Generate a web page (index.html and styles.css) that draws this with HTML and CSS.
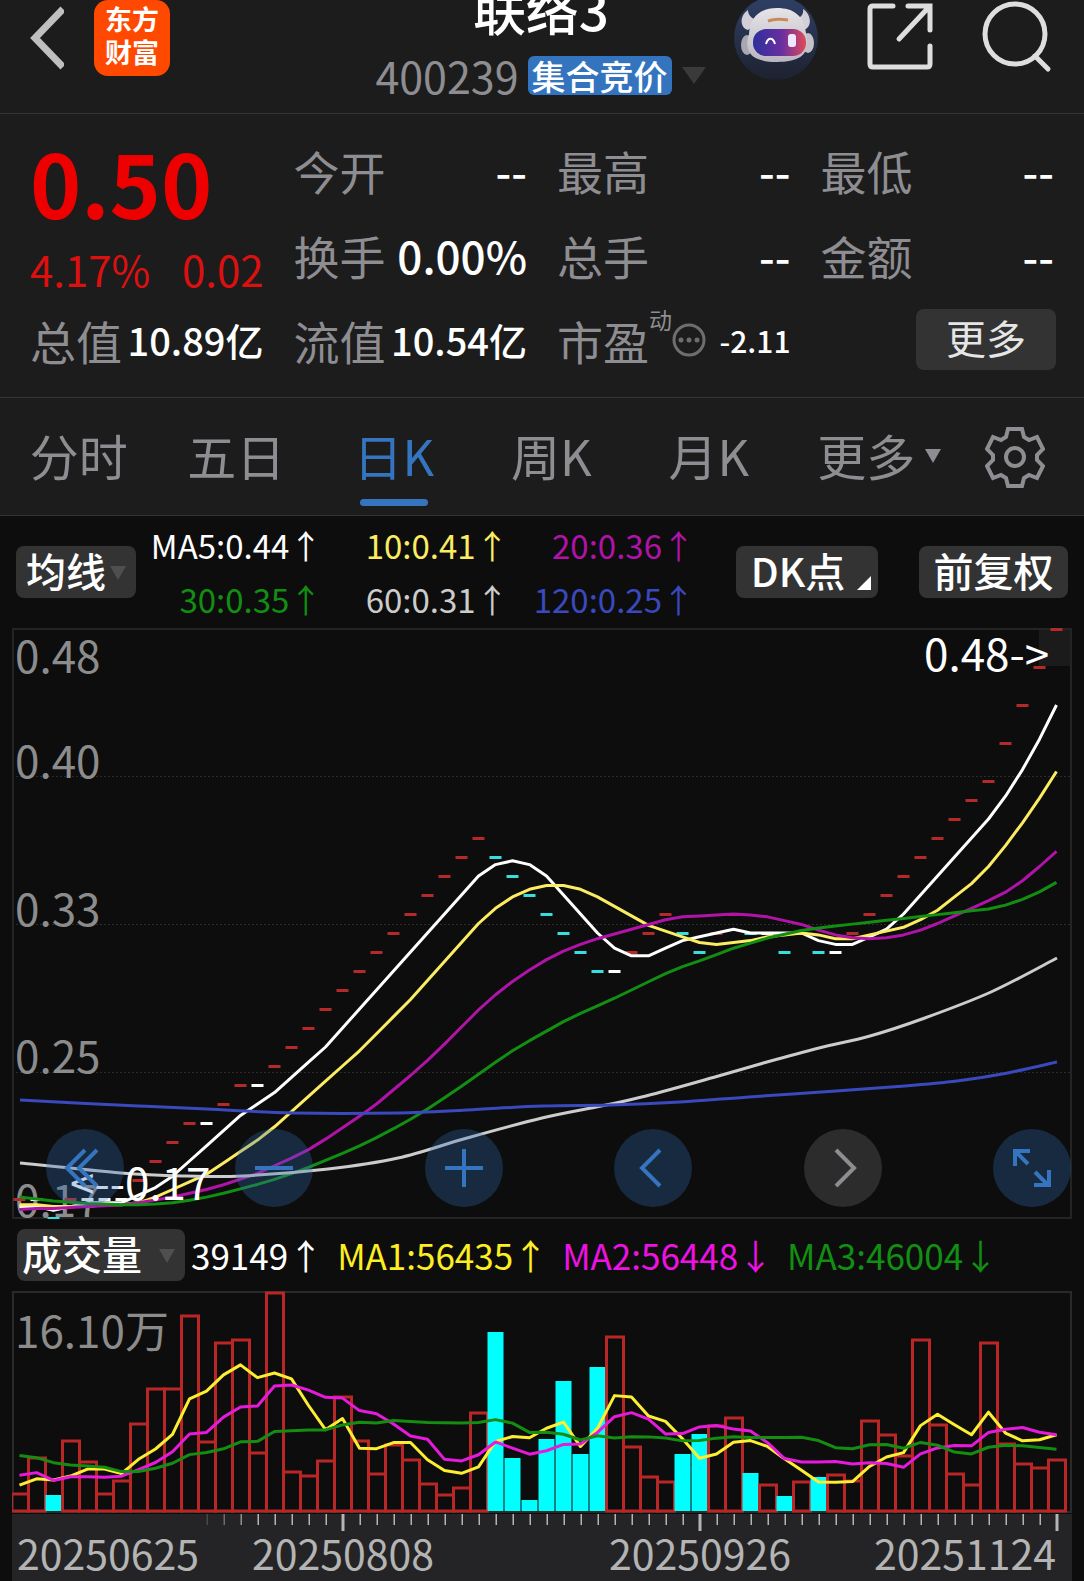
FILE: index.html
```html
<!DOCTYPE html>
<html lang="zh-CN">
<head>
<meta charset="utf-8">
<meta name="viewport" content="width=device-width, initial-scale=1">
<title>联络3 400239</title>
<link rel="stylesheet" href="styles.css">
</head>
<body>

<header class="header">
	<div class="header-left">
		<a class="back" href="#" aria-label="返回">
			<svg width="34" height="76" viewBox="0 0 34 76"><path d="M33 9 5 38l28 29" fill="none" stroke="#bfbfbf" stroke-width="7"/></svg>
		</a>
		<a class="logo" href="#"><span>东方</span><span>财富</span></a>
	</div>
	<div class="stock">
		<h1>联络3</h1>
		<div class="stock-code">
			<span>400239</span>
			<span class="tag">集合竞价</span>
			<svg width="26" height="17" viewBox="0 0 26 17"><path d="M1 0h24L13 17z" fill="#3a3a3a"/></svg>
		</div>
	</div>
	<div class="header-right">
		<a href="#" aria-label="助手">
			<svg width="84" height="84" viewBox="0 0 84 84">
				<defs>
					<linearGradient id="sky" x1="0" y1="0" x2="0" y2="1"><stop offset="0" stop-color="#2f4066"/><stop offset="1" stop-color="#1e2230"/></linearGradient>
					<linearGradient id="face" x1="0" y1="0" x2="1" y2="0"><stop offset="0" stop-color="#2d2f9c"/><stop offset=".55" stop-color="#6a2fa0"/><stop offset="1" stop-color="#e04a58"/></linearGradient>
					<linearGradient id="shell" x1="0" y1="0" x2="0" y2="1"><stop offset="0" stop-color="#e6e4e8"/><stop offset="1" stop-color="#b9b6bf"/></linearGradient>
				</defs>
				<circle cx="42" cy="42" r="42" fill="url(#sky)"/>
				<path d="M14 14C5 20 6 32 14 34l12-10c-7 0-12-4-12-10zM69 13c9 6 9 18 1 21L59 23c7 0 11-4 10-10z" fill="#d2d0d6"/>
				<ellipse cx="13" cy="49" rx="6" ry="10" fill="#a9a7b2"/>
				<ellipse cx="74" cy="47" rx="6" ry="10" fill="#c4c1c9"/>
				<path d="M15 38c1-18 12-26 28-26 17 0 27 8 29 25 5 20-4 29-29 29-24 0-34-9-28-28z" fill="url(#shell)"/>
				<rect x="19" y="33" width="53" height="27" rx="13" fill="url(#face)"/>
				<path d="M34 25c5-2 14-2 20-1" fill="none" stroke="#c98a5a" stroke-width="3"/>
				<path d="M32 48c2-7 7-7 9 0" fill="none" stroke="#fff" stroke-width="2"/>
				<rect x="54" y="38" width="8" height="13" rx="3" fill="#efe6ff"/>
			</svg>
		</a>
		<a href="#" aria-label="分享">
			<svg width="66" height="84" viewBox="0 0 66 84"><path d="M26 10H6q-3 0-3 3v55q0 3 3 3h54q3 0 3-3V50M41 10h22v24M62 11 32 43" fill="none" stroke="#dedede" stroke-width="5" stroke-linecap="round"/></svg>
		</a>
		<a href="#" aria-label="搜索">
			<svg width="70" height="84" viewBox="0 0 70 84"><circle cx="33" cy="38" r="30" fill="none" stroke="#dedede" stroke-width="5"/><path d="m53 60 13 13" stroke="#dedede" stroke-width="5" stroke-linecap="round"/></svg>
		</a>
	</div>
</header>

<section class="quote">
	<div class="price">
		<strong>0.50</strong>
		<p><span>4.17%</span><span>0.02</span></p>
	</div>
	<div class="cell"><span>今开</span><b>--</b></div>
	<div class="cell"><span>最高</span><b>--</b></div>
	<div class="cell"><span>最低</span><b>--</b></div>
	<div class="cell"><span>换手</span><b>0.00%</b></div>
	<div class="cell"><span>总手</span><b>--</b></div>
	<div class="cell"><span>金额</span><b>--</b></div>
	<div class="cell"><span>总值</span><b class="mid">10.89亿</b></div>
	<div class="cell"><span>流值</span><b class="mid">10.54亿</b></div>
	<div class="cell">
		<span>市盈</span><sup>动</sup>
		<svg width="34" height="34" viewBox="0 0 34 34"><circle cx="17" cy="17" r="15" fill="none" stroke="#6e6e70" stroke-width="3"/><g fill="#6e6e70"><circle cx="9" cy="17" r="2.5"/><circle cx="17" cy="17" r="2.5"/><circle cx="25" cy="17" r="2.5"/></g></svg>
		<b class="small">-2.11</b>
	</div>
	<button class="more" type="button">更多</button>
</section>

<nav class="tabs">
	<a href="#">分时</a>
	<a href="#">五日</a>
	<a href="#" class="active">日K</a>
	<a href="#">周K</a>
	<a href="#">月K</a>
	<a href="#" class="drop">更多</a>
	<button type="button" aria-label="设置">
		<svg width="60" height="62" viewBox="0 0 60 62"><path d="M23 3h14l2 8 5 3 8-3 6 12-6 6v5l6 6-6 12-8-3-5 3-2 8H23l-2-8-5-3-8 3-6-12 6-6v-5l-6-6 6-12 8 3 5-3z" fill="none" stroke="#8e8d92" stroke-width="4"/><circle cx="30" cy="31" r="9" fill="none" stroke="#8e8d92" stroke-width="4"/></svg>
	</button>
</nav>

<section class="averages">
	<label class="picker">
		<select aria-label="主图指标"><option>均线</option></select>
	</label>
	<ul>
		<li class="white">MA5:0.44↑</li>
		<li class="yellow">10:0.41↑</li>
		<li class="purple">20:0.36↑</li>
		<li class="green">30:0.35↑</li>
		<li class="gray">60:0.31↑</li>
		<li class="blue">120:0.25↑</li>
	</ul>
	<button class="dk" type="button">DK点</button>
	<button class="adjust" type="button">前复权</button>
</section>

<section class="chart">
	<svg id="kline" viewBox="0 0 1060 591"></svg>
	<div class="controls">
		<button type="button" aria-label="最早"><svg viewBox="0 0 78 78"><path d="M39 21 21 39l18 18M51 21 33 39l18 18"/></svg></button>
		<button type="button" aria-label="缩小"><svg viewBox="0 0 78 78"><path d="M20 39h38"/></svg></button>
		<button type="button" aria-label="放大"><svg viewBox="0 0 78 78"><path d="M20 39h38M39 20v38"/></svg></button>
		<button type="button" aria-label="向左"><svg viewBox="0 0 78 78"><path d="M46 21 28 39l18 18"/></svg></button>
		<button type="button" aria-label="向右" class="off"><svg viewBox="0 0 78 78"><path d="m32 21 18 18-18 18"/></svg></button>
		<button type="button" aria-label="全屏"><svg viewBox="0 0 78 78"><path d="M37 22H22v15M22 22l13 13M42 43l13 13M56 41v15H41"/></svg></button>
	</div>
</section>

<section class="volumes">
	<label class="picker wide">
		<select aria-label="副图指标"><option>成交量</option></select>
	</label>
	<span class="white">39149↑</span>
	<span class="bright-yellow">MA1:56435↑</span>
	<span class="magenta">MA2:56448↓</span>
	<span class="green">MA3:46004↓</span>
</section>

<section class="chart">
	<svg id="volume" viewBox="0 0 1060 290"></svg>
</section>

<script src="chart.js"></script>
</body>
</html>
```

FILE: styles.css
```css
* { padding: 0; margin: 0; box-sizing: border-box; }
body { background: #0d0d0d; color: #fff; font-family: "Noto Sans CJK SC", sans-serif; }
a { color: inherit; text-decoration: none; }
ul { list-style: none; }
b { font-weight: 500; }
svg { display: block; }
button, select { font-family: inherit; color: #fff; border: none; background: none; cursor: pointer; }

.white { color: #fff; }
.yellow { color: #fbec62; }
.bright-yellow { color: #fdee22; }
.purple { color: #b013a8; }
.magenta { color: #ee12e2; }
.green { color: #128f12; }
.gray { color: #ccc; }
.blue { color: #3a49bd; }

/* header */
.header { display: grid; grid-template-columns: 1fr auto 1fr; height: 114px; padding: 0 32px 0 30px; background: #1c1c1c; border-bottom: 1px solid #343434; overflow: hidden; }
.header-left { display: flex; gap: 30px; align-items: flex-start; }
.header-right { display: flex; gap: 49px; justify-content: flex-end; margin-top: -4px; }
.logo { display: flex; flex-direction: column; align-items: center; width: 76px; height: 76px; padding-top: 2px; border-radius: 14px; background: #ff4800; font-size: 27px; font-weight: bold; line-height: 33px; }
.stock { display: flex; flex-direction: column; align-items: center; margin-top: -32px; }
.stock h1 { font-size: 53px; font-weight: 500; line-height: 80px; }
.stock-code { display: flex; align-items: center; gap: 9px; color: #8e8d92; font-size: 43px; line-height: 54px; }
.tag { padding: 0 4px; border-radius: 6px; background: #3474bf; color: #fff; font-size: 34px; font-weight: 500; line-height: 39px; }

/* quote */
.quote { display: grid; grid-template-columns: repeat(4, 1fr); grid-auto-rows: 85px; column-gap: 30px; padding: 16px 30px 12px; background: #1c1c1c; border-bottom: 1px solid #343434; }
.price { grid-row: span 2; color: #ee0000; }
.price strong { display: block; font-size: 87px; font-weight: bold; line-height: 102px; }
.price p { display: flex; justify-content: space-between; color: #dd1010; font-size: 42px; line-height: 74px; }
.cell { display: flex; align-items: center; padding-bottom: 6px; color: #8e8d92; font-size: 46px; white-space: nowrap; }
.cell b { margin-left: auto; color: #fff; font-size: 44px; }
.cell b.mid { font-size: 38px; }
.cell b.small { font-size: 30px; }
.cell sup { align-self: flex-start; font-size: 23px; line-height: 38px; }
.more { align-self: center; justify-self: end; width: 140px; height: 61px; margin-right: -2px; padding-bottom: 6px; border-radius: 8px; background: #333; color: #e6e6e6; font-size: 40px; line-height: 54px; }
.quote .more { margin-bottom: 6px; }

/* tabs */
.tabs { display: grid; grid-template-columns: repeat(6, 1fr) 139px; height: 118px; background: #1c1c1c; border-bottom: 1px solid #343434; color: #8e8d92; font-size: 49px; line-height: 114px; }
.tabs a { position: relative; text-align: center; }
.tabs button { display: flex; align-items: center; justify-content: center; }
.tabs .active { color: #3574bf; }
.tabs .active:after { content: ""; position: absolute; bottom: 9px; left: 50%; width: 68px; height: 7px; margin-left: -34px; border-radius: 4px; background: #3574bf; }
.tabs .drop:after { content: ""; position: absolute; top: 51px; right: 4px; border: 8px solid transparent; border-top: 14px solid #8e8d92; border-bottom: 0; }

/* indicator rows */
.averages { display: flex; align-items: center; height: 112px; padding: 0 16px; font-size: 40px; }
.averages ul { display: grid; grid-template-columns: repeat(3, 1fr); flex: 1; margin-right: 41px; font-size: 33px; line-height: 54px; text-align: right; white-space: nowrap; }
.picker { position: relative; flex: none; width: 120px; height: 52px; border-radius: 8px; background: #333; }
.picker select { display: block; appearance: none; width: 100%; height: 52px; padding: 0 0 4px 10px; font-size: 40px; font-weight: 500; line-height: 48px; }
.picker:after { content: ""; position: absolute; right: 10px; top: 20px; border: 8px solid transparent; border-top: 14px solid #4f4f4f; border-bottom: 0; pointer-events: none; }
.picker.wide { width: 168px; margin-right: -8px; }
.picker.wide select { padding-left: 5px; }
.dk, .adjust { height: 52px; padding-bottom: 4px; border-radius: 8px; background: #333; font-size: 40px; font-weight: 500; line-height: 48px; }
.dk { position: relative; width: 142px; padding-right: 18px; margin-right: 41px; }
.dk:after { content: ""; position: absolute; right: 7px; bottom: 8px; border-left: 14px solid transparent; border-bottom: 14px solid #fff; }
.adjust { width: 149px; }

.volumes { display: flex; align-items: center; gap: 14px; height: 72px; padding-left: 17px; font-size: 35px; line-height: 50px; white-space: nowrap; }

/* charts */
.chart { position: relative; margin: 0 12px; }
.chart > svg { width: 100%; height: auto; }
.chart text { font-size: 44px; fill: #8c8c8c; }
.chart .mark { fill: #fff; }
.chart .date { font-size: 41px; fill: #b4b4b4; }
.controls { position: absolute; left: 34px; right: 1px; bottom: 12px; display: flex; justify-content: space-between; }
.controls button { width: 78px; height: 78px; border-radius: 50%; background: rgba(50, 110, 183, 0.3); }
.controls path { fill: none; stroke: #3574bf; stroke-width: 4; }
.controls .off { background: #2c2c2c; }
.controls .off path { stroke: #8e8d92; }
```

FILE: chart.js
```js
var STEP = 17, LEFT = 7.5;
var RED = '#b92626', CYAN = '#00ffff';

// closes before the first visible day, oldest first
var oldPrices = [21,20,20,20,19,19,19,19,19,18, 17,17,17,17,17,17,17,17,18,18, 18,18,18,18,17,18,18,17,17];
var prices = [18,18,17,18,18,18,18,19,20,21,22,22,23,24,24,25,26,27,28,29,30,31,32,33,34,35,36,37,36,35,34,
	33,32,31,30,30,31,32,33,32,31,32,33,32,32,31,32,31,31,32,33,34,35,36,37,38,39,40,42,44,46,48];
var oldVolumes = [7.3,8.6,8.6,5.2,3.4,8.7,6.5,4.2,1.8, 1.7,2.1,7,2.6,3.7,1.7,1.7,1.7,3.8,1.2];
var volumes = [1.42,4.03,1.27,5.26,3.74,1.42,2.37,6.5,9.05,9.12,14.4,5.18,12.49,12.71,4.43,16.1,3.03,2.74,3.84,8.51,5.26,
	2.86,4.96,3.89,2.15,1.32,1.86,7.31,13.2,3.96,0.86,5.35,9.58,4.23,10.61,12.86,4.84,2.62,2.27,4.23,5.75,6.38,6.94,2.86,
	2.08,1.2,2.25,2.59,2.79,2.32,6.72,5.75,4.16,12.69,6.48,2.89,2.08,12.42,5.06,3.62,3.28,3.91];
// days where the volume bar is filled
var down = [2,28,29,30,31,32,33,34,39,40,43,45,47];

function x(i) { return LEFT + i * STEP; }
function priceY(p) { return 590 - (p - 17) * 19; }
function volumeY(v) { return 221 - v * 13.65; }

function average(old, data, n, toY) {
	var all = old.concat(data), points = [];
	for (var i = 0; i < data.length; i++) {
		var sum = 0;
		for (var j = 0; j < n; j++) {
			sum += all[old.length + i - j];
		}
		points.push([x(i), toY(sum / n)]);
	}
	return points;
}

function line(points, color) {
	return '<polyline points="' + points.join(' ') + '" fill="none" stroke="' + color + '" stroke-width="3" stroke-linejoin="round"/>';
}

// curve through a few points
function curve(p, color) {
	var d = 'M' + p[0];
	for (var i = 0; i < p.length - 1; i++) {
		var a = p[i - 1] || p[i], b = p[i], c = p[i + 1], e = p[i + 2] || c;
		d += 'C' + [b[0] + (c[0] - a[0]) / 6, b[1] + (c[1] - a[1]) / 6, c[0] - (e[0] - b[0]) / 6, c[1] - (e[1] - b[1]) / 6, c[0], c[1]];
	}
	return '<path d="' + d + '" fill="none" stroke="' + color + '" stroke-width="3"/>';
}

function text(s, left, top, cls) {
	return '<text x="' + left + '" y="' + top + '" class="' + (cls || '') + '">' + s + '</text>';
}

function drawKline() {
	var out = '<rect x="1027" y="0" width="32" height="38" fill="#1b1b1b"/>';
	[148, 296, 444].forEach(function (y) {
		out += '<path d="M0 ' + y + '.5H1059" stroke="#2c2c2c" stroke-dasharray="2 2"/>';
	});
	out += '<rect x="1" y="1" width="1058" height="589" fill="none" stroke="#242424" stroke-width="2"/>';
	out += text('0.48', 3, 45) + text('0.40', 3, 150) + text('0.33', 3, 298) + text('0.25', 3, 445) + text('0.17', 3, 589);
	prices.forEach(function (p, i) {
		var last = i ? prices[i - 1] : 17;
		var color = p > last ? '#b42a2a' : p < last ? '#38dede' : '#fff';
		out += '<rect x="' + (x(i) - 6) + '" y="' + (priceY(p) - 1) + '" width="12" height="3" fill="' + color + '"/>';
	});
	out += line(average(oldPrices, prices, 5, priceY), '#fff');
	out += line(average(oldPrices, prices, 10, priceY), '#fbec62');
	out += line(average(oldPrices, prices, 20, priceY), '#b013a8');
	out += line(average(oldPrices, prices, 30, priceY), '#128f12');
	out += curve([[8,535],[109,545],[175,548],[230,548],[316,541],[386,530],[455,510],[530,490],[589,478],[634,468],[703,449],[755,434],[807,420],[858,408],[910,391],[979,364],[1045,330]], '#ccc');
	out += curve([[8,472],[64,475],[126,478],[195,481],[282,485],[386,485],[455,482],[530,478],[599,477],[668,474],[737,469],[824,463],[893,458],[945,453],[990,446],[1045,434]], '#3a49bd');
	out += text('0.48-&gt;', 912, 43, 'mark') + text('&lt;--0.17', 58, 572, 'mark');
	document.getElementById('kline').innerHTML = out;
}

function drawVolume() {
	var out = '<rect x="1" y="1" width="1058" height="220" fill="none" stroke="#2a2a2a" stroke-width="2"/>';
	out += text('16.10万', 3, 57);
	volumes.forEach(function (v, i) {
		var y = Math.round(volumeY(v));
		if (down.indexOf(i) > -1) {
			out += '<rect x="' + (x(i) - 8) + '" y="' + y + '" width="16" height="' + (220 - y) + '" fill="' + CYAN + '"/>';
		} else {
			out += '<rect x="' + (x(i) - 8) + '" y="' + (y + 1) + '" width="17" height="' + (219 - y) + '" fill="none" stroke="' + RED + '" stroke-width="3"/>';
		}
	});
	out += line(average(oldVolumes, volumes, 5, volumeY), '#fdee32');
	out += line(average(oldVolumes, volumes, 10, volumeY), '#e51adb');
	out += line(average(oldVolumes, volumes, 20, volumeY), '#158c12');
	out += '<rect x="0" y="223" width="1060" height="67" fill="#242426"/>';
	volumes.forEach(function (v, i) {
		var big = i == 19 || i == 40 || i == 61;
		out += '<rect x="' + (x(i) - (big ? 1 : 0)) + '" y="223" width="' + (big ? 3 : 1.5) + '" height="' + (big ? 17 : 11) + '" fill="#b4b4b4" opacity="' + Math.max(0, Math.min(1, (i - 10) / 4)) + '"/>';
	});
	out += text('20250625', 5, 279, 'date') + text('20250808', 240, 279, 'date') + text('20250926', 597, 279, 'date') + text('20251124', 862, 279, 'date');
	document.getElementById('volume').innerHTML = out;
}

drawKline();
drawVolume();
```
